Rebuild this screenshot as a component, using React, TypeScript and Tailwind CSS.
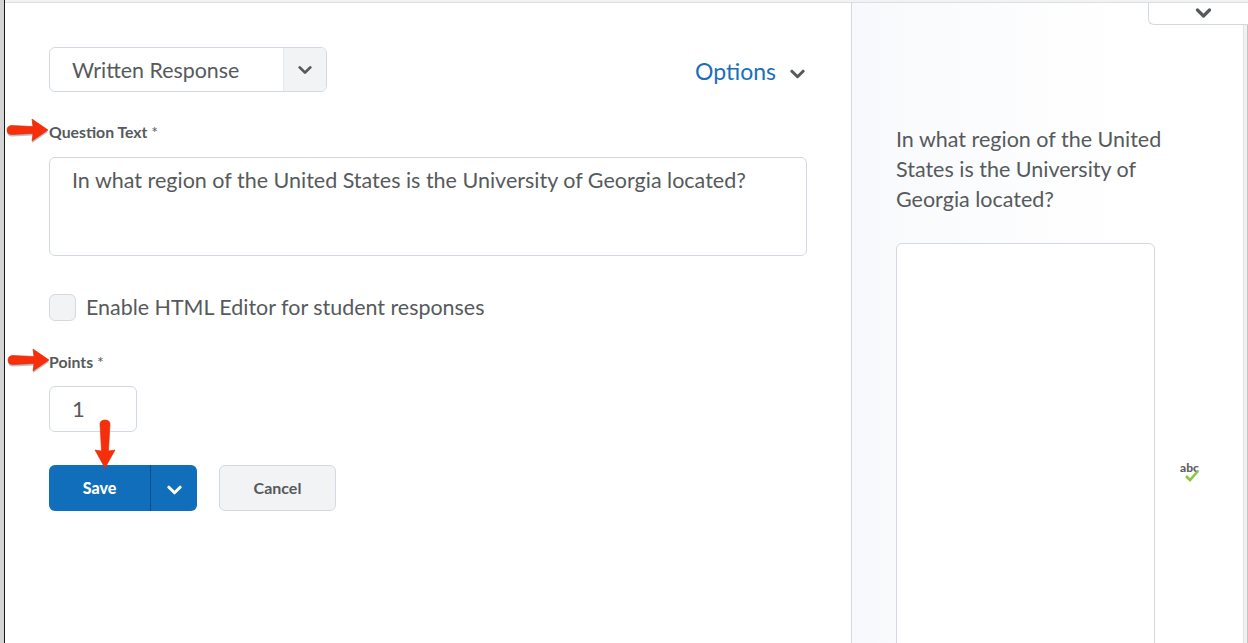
function Chevron({ className }: { className: string }) {
  return (
    <svg viewBox="0 0 16 10" className={className} fill="none" stroke="currentColor" strokeWidth="3.2" strokeLinecap="round" strokeLinejoin="round">
      <path d="M2 2l6 6 6-6" />
    </svg>
  );
}

// hand-drawn red annotation arrow, x 0-42, y 0-24, tip at right
function ArrowRight({ className }: { className: string }) {
  const d = "M1 12C1 9 3 7.500 6 7.500L27 8.500 26 1 42 12 26 23 27 15.500 6 16.500C3 16.500 1 15 1 12Z";
  return (
    <svg viewBox="0 0 44 27" className={className}>
      <path d={d} fill="#000" opacity="0.25" transform="translate(0 2)" />
      <path d={d} fill="#f62f0a" stroke="#d92a08" strokeWidth="0.6" />
    </svg>
  );
}

export default function App() {
  return (
    <div className="relative flex h-[643px] w-[1248px] overflow-hidden bg-white font-['Lato',sans-serif] text-[#565a5c]">
      <div className="w-[4px] shrink-0 bg-[#d4d4d4]" />
      <div className="w-px shrink-0 bg-[#1a1a1a]" />
      <div className="flex min-w-0 flex-1 flex-col">
        <div className="h-[3px] shrink-0 border-b border-[#dcdee0] bg-[#f1f2f3]" />
        <div className="flex min-h-0 flex-1">
          <main className="w-[847px] shrink-0 border-r border-[#d3d9e3] pl-[44px] pr-[44px] pt-[44px]">
            <div className="flex items-center justify-between">
              <div className="flex h-[45px] w-[278px] overflow-hidden rounded-[6px] border border-[#d3d9e3]">
                <div className="flex flex-1 items-center pt-[2px] pl-[22px] text-[21.4px]">Written Response</div>
                <div className="flex w-[43px] items-center justify-center border-l border-[#e6eaf0] bg-[#f1f3f5]">
                  <Chevron className="h-[10px] w-[14px] text-[#565a5c]" />
                </div>
              </div>
              <div className="flex items-center gap-[14px] pr-[2px]">
                <span className="pt-[4px] text-[23px] text-[#1a6fb8]">Options</span>
                <Chevron className="mt-[8px] h-[10px] w-[15px] text-[#565a5c]" />
              </div>
            </div>

            <div className="mt-[31px] text-[15.8px] font-bold leading-[17px]">
              Question Text <span className="font-normal">*</span>
            </div>
            <div className="mt-[17px] h-[99px] w-[758px] rounded-[6px] border border-[#d3d9e3] px-[22px] pt-[7px] text-[21.5px] leading-[30px]">
              In what region of the United States is the University of Georgia located?
            </div>

            <div className="mt-[37px] flex items-center gap-[10px]">
              <div className="h-[27px] w-[27px] rounded-[6px] border border-[#d3d9e3] bg-[#f1f3f5]" />
              <span className="-mt-[1px] text-[21.45px] leading-[30px]">Enable HTML Editor for student responses</span>
            </div>

            <div className="mt-[31px] text-[15.8px] font-bold leading-[17px]">
              Points <span className="font-normal">*</span>
            </div>
            <div className="mt-[16px] flex h-[46px] w-[88px] items-center rounded-[6px] border border-[#d3d9e3] pb-[1px] pl-[22px] text-[22px]">1</div>

            <div className="mt-[33px] flex gap-[22px]">
              <div className="flex h-[46px] w-[148px] overflow-hidden rounded-[6px] bg-[#116ebb] text-white">
                <div className="flex w-[101px] items-center justify-center text-[16px] font-black">Save</div>
                <div className="flex flex-1 items-center justify-center border-l border-[#0c4d8c] pt-[4px]">
                  <Chevron className="h-[10px] w-[15px] text-white" />
                </div>
              </div>
              <div className="flex h-[46px] w-[117px] items-center justify-center rounded-[6px] border border-[#d3d9e3] bg-[#f1f3f5] text-[16px] font-bold">Cancel</div>
            </div>
          </main>

          <aside className="min-w-0 flex-1 bg-linear-to-r from-[#f8f9fc] to-white to-[70%] pl-[44px] pt-[121px]">
            <p className="w-[280px] text-[21.5px] leading-[30px]">
              In what region of the United States is the University of Georgia located?
            </p>
            <div className="mt-[29px] h-[420px] w-[259px] rounded-t-[6px] border border-[#d3d9e3] bg-white" />
          </aside>
          <div className="w-[5px] shrink-0 border-x border-l-[#e2e2e2] border-r-[#c4c4c4] bg-[#f2f2f2]" />
        </div>
      </div>

      <div className="absolute right-0 top-[3px] flex h-[22px] w-[100px] items-center justify-center rounded-bl-[6px] border-b border-l border-[#d3d9e3] bg-white pl-[9px] pb-[2px]">
        <Chevron className="h-[10px] w-[17px] text-[#565a5c]" />
      </div>

      <ArrowRight className="absolute left-[6px] top-[118px] h-[27px] w-[44px]" />
      <ArrowRight className="absolute left-[7px] top-[348px] h-[27px] w-[44px]" />
      <svg viewBox="0 0 22 50" className="absolute left-[94px] top-[419px] h-[50px] w-[22px]">
        <path d="M6 5C6 2.500 8 1 11 1s5 1.500 5 4L14.500 32 21 31 11 49 1 31 7.500 32Z" fill="#f62f0a" stroke="#d92a08" strokeWidth="0.6" />
      </svg>

      <svg viewBox="0 0 30 26" className="absolute left-[1180px] top-[457px] h-[26px] w-[30px]">
        <text x="0" y="15" fontSize="12" fontWeight="900" fill="#5f5f5f" fontFamily="Lato, sans-serif">abc</text>
        <path d="M6 19l4 4 8-9" fill="none" stroke="#8cc63f" strokeWidth="2.600" />
      </svg>
    </div>
  );
}
